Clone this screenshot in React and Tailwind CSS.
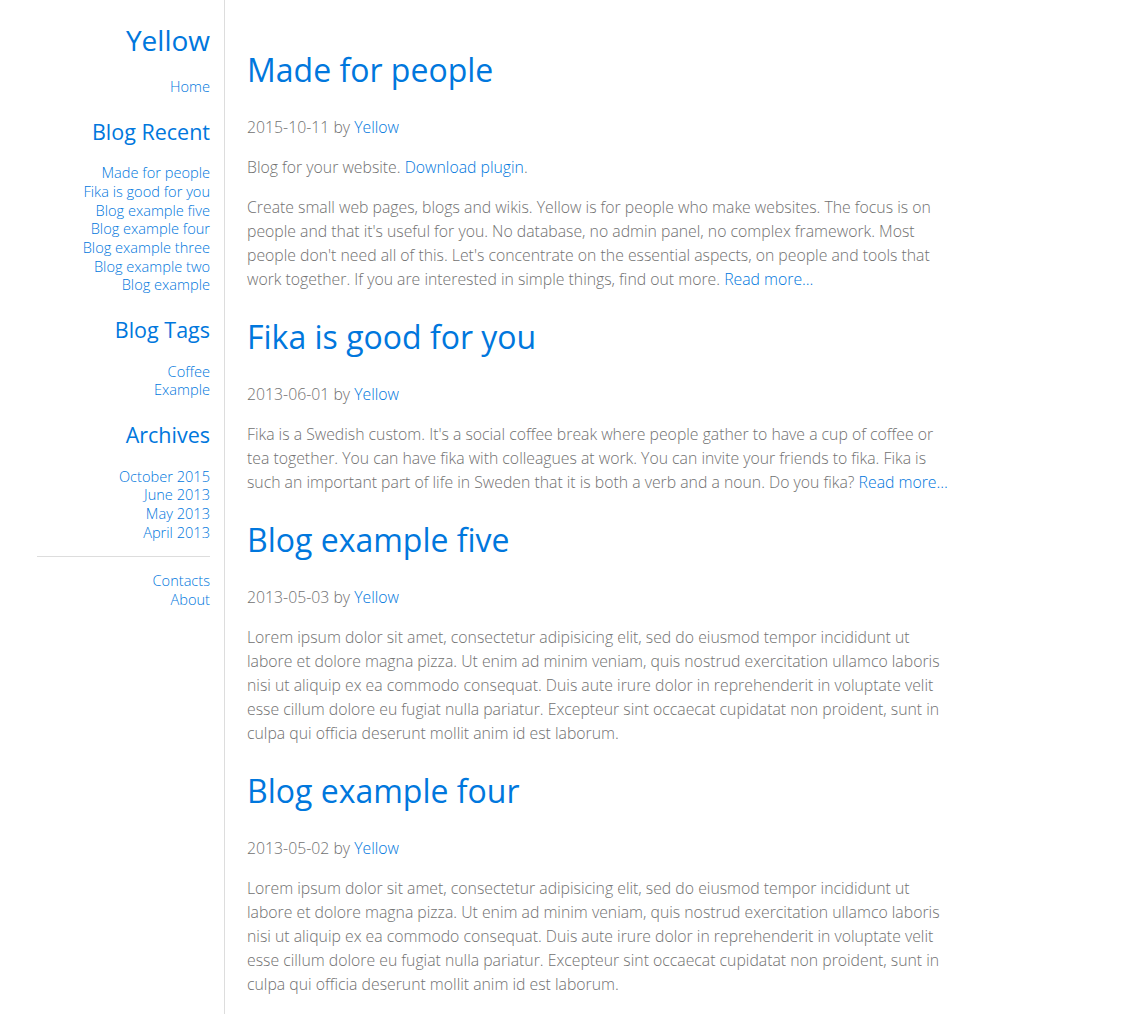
const recent = [
  "Made for people",
  "Fika is good for you",
  "Blog example five",
  "Blog example four",
  "Blog example three",
  "Blog example two",
  "Blog example",
];
const tags = ["Coffee", "Example"];
const archives = ["October 2015", "June 2013", "May 2013", "April 2013"];

const lorem =
  "Lorem ipsum dolor sit amet, consectetur adipisicing elit, sed do eiusmod tempor incididunt ut labore et dolore magna pizza. Ut enim ad minim veniam, quis nostrud exercitation ullamco laboris nisi ut aliquip ex ea commodo consequat. Duis aute irure dolor in reprehenderit in voluptate velit esse cillum dolore eu fugiat nulla pariatur. Excepteur sint occaecat cupidatat non proident, sunt in culpa qui officia deserunt mollit anim id est laborum.";

const Link = ({ children }) => (
  <a href="#" className="text-[#07d] no-underline">
    {children}
  </a>
);

const SideHeading = ({ children }) => (
  <h2 className="mt-[23px] mb-[18.5px] text-[21.5px] leading-[26px] font-normal text-[#07d]">{children}</h2>
);

const SideList = ({ items }) => (
  <ul className="leading-[18.7px]">
    {items.map((item) => (
      <li key={item}>
        <Link>{item}</Link>
      </li>
    ))}
  </ul>
);

const Meta = ({ date }) => (
  <p className="mb-4">
    {date} by <Link>Yellow</Link>
  </p>
);

const Post = ({ title, date, children }) => (
  <article>
    <h1 className="mt-6 mb-6 text-[32px] leading-[43px] font-normal text-[#07d]">{title}</h1>
    <Meta date={date} />
    {children}
  </article>
);

const App = () => {
  return (
    <div
      className="flex min-h-[1014px] bg-white font-light text-[#717171]"
      style={{ fontFamily: '"Open Sans", "Liberation Sans", sans-serif' }}
    >
      <aside className="w-[225px] shrink-0 border-r border-[#ddd] pl-[37px] pr-[14px] pt-[23px] text-right text-[14.6px]">
        <div className="text-[28px] leading-[34px] font-normal text-[#07d]">Yellow</div>
        <div className="mt-[20px] leading-[18.7px]">
          <Link>Home</Link>
        </div>

        <SideHeading>Blog Recent</SideHeading>
        <SideList items={recent} />

        <SideHeading>Blog Tags</SideHeading>
        <SideList items={tags} />

        <SideHeading>Archives</SideHeading>
        <SideList items={archives} />

        <hr className="my-[14.5px] border-t border-[#ddd]" />
        <SideList items={["Contacts", "About"]} />
      </aside>

      <main className="max-w-[727px] pl-[22px] pt-6 text-[15.8px] leading-6">
        <Post title="Made for people" date="2015-10-11">
          <p className="mb-4">
            Blog for your website. <Link>Download plugin</Link>.
          </p>
          <p className="mb-4">
            Create small web pages, blogs and wikis. Yellow is for people who make websites. The focus is on
            people and that it's useful for you. No database, no admin panel, no complex framework. Most
            people don't need all of this. Let's concentrate on the essential aspects, on people and tools that
            work together. If you are interested in simple things, find out more. <Link>Read more…</Link>
          </p>
        </Post>

        <Post title="Fika is good for you" date="2013-06-01">
          <p className="mb-4">
            Fika is a Swedish custom. It's a social coffee break where people gather to have a cup of coffee or
            tea together. You can have fika with colleagues at work. You can invite your friends to fika. Fika is
            such an important part of life in Sweden that it is both a verb and a noun. Do you fika?{" "}
            <Link>Read more…</Link>
          </p>
        </Post>

        <Post title="Blog example five" date="2013-05-03">
          <p className="mb-4">{lorem}</p>
        </Post>

        <Post title="Blog example four" date="2013-05-02">
          <p className="mb-4">{lorem}</p>
        </Post>
      </main>
    </div>
  );
};

export default App;
